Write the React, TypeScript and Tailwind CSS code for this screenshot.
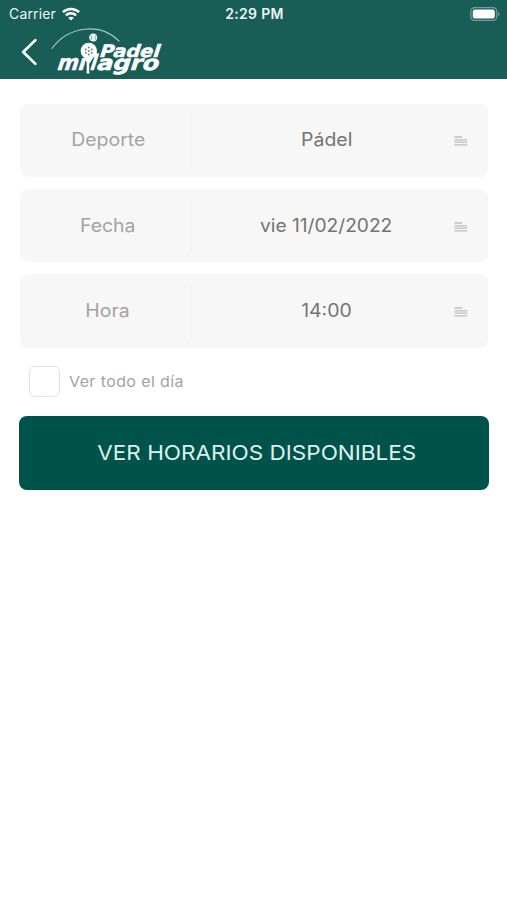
import React from "react";

function StatusBar() {
  return (
    <div className="flex h-7 items-center justify-between pl-[9px] pr-[7px] text-[#eaf5f2]">
      <div className="flex w-[150px] items-center gap-[6px]">
        <span className="text-[14px] leading-none tracking-[0.15px]">Carrier</span>
        <svg className="-mt-px" width="18" height="14" viewBox="0 0 18 14" fill="none" stroke="#fff" strokeWidth="2.5">
          <path d="M0.9 5.2C5.5 0.8 12.5 0.8 17.1 5.2" />
          <path d="M3.9 8.4C6.8 5.6 11.2 5.6 14.1 8.4" />
          <path d="M9 13.6 6.2 10.7C7.8 9.3 10.2 9.3 11.8 10.7Z" fill="#fff" stroke="none" />
        </svg>
      </div>
      <span className="text-[14px] font-semibold leading-none tracking-[0.3px]">2:29 PM</span>
      <div className="flex w-[150px] justify-end">
        <svg className="-mt-px" width="30" height="14" viewBox="0 0 30 14">
          <rect x="0.8" y="0.6" width="26" height="12.8" rx="3.8" fill="none" stroke="#fff" strokeOpacity="0.4" strokeWidth="1.2" />
          <rect x="2.8" y="2.6" width="22" height="8.8" rx="2" fill="#fff" />
          <path d="M28.2 4.8C30 5.6 30 8.4 28.2 9.2Z" fill="#fff" fillOpacity="0.45" />
        </svg>
      </div>
    </div>
  );
}

function Logo() {
  return (
    <svg width="125" height="50" viewBox="45 28 125 50" fontFamily="'DejaVu Sans', sans-serif" fontWeight="700">
      <path d="M52 48.5C68 26 101 22 119 41" fill="none" stroke="#a9cbc4" strokeWidth="1.1" strokeLinecap="round" />
      <g fill="#fff" stroke="#fff" strokeWidth="0.5">
        <text transform="translate(98.5 57) skewX(-18)" fontSize="17" textLength="60" lengthAdjust="spacingAndGlyphs">Padel</text>
        <text transform="translate(56 70.3) skewX(-18)" fontSize="21.5" textLength="28" lengthAdjust="spacingAndGlyphs">mı</text>
        <text transform="translate(89 70.3) skewX(-18)" fontSize="21.5" textLength="6" lengthAdjust="spacingAndGlyphs">l</text>
        <text transform="translate(95.5 70.3) skewX(-18)" fontSize="20.5" textLength="62" lengthAdjust="spacingAndGlyphs">agro</text>
      </g>
      <path d="M84 56 86.6 63V73.5H89.4V64L94 56Z" fill="#fff" />
      <path d="M85.8 61V72M89.8 63V72" stroke="#195d57" strokeWidth="0.7" fill="none" />
      <circle cx="88.8" cy="51" r="8.2" fill="#fff" />
      <g fill="#5b8c83">
        <circle cx="88.8" cy="51" r="1" />
        <circle cx="85.8" cy="49.4" r="1" />
        <circle cx="88.8" cy="47.6" r="1" />
        <circle cx="91.8" cy="49.4" r="1" />
        <circle cx="91.8" cy="52.8" r="1" />
        <circle cx="88.8" cy="54.5" r="1" />
        <circle cx="85.8" cy="52.8" r="1" />
      </g>
      <circle cx="93.2" cy="37.6" r="4" fill="#eef7f4" />
      <path d="M90.6 34.6c1.4 1.8 1.4 4.2 0 5.8M96 35.4c-1.2 1.3-1.2 3.2-.2 4.4" fill="none" stroke="#195d57" strokeWidth="0.5" />
    </svg>
  );
}

function Lines() {
  return (
    <svg className="mt-[2px]" width="14" height="10" viewBox="0 0 14 10" stroke="#bdbdbd" strokeWidth="1.3">
      <path d="M0.5 1H8M0.5 3.8H13.3M0.5 6.2H13.3M0.5 8.8H13.3" />
    </svg>
  );
}

function Field({ label, value, valueClass }: { label: string; value: string; valueClass: string }) {
  return (
    <div className="flex h-[73.3px] items-center rounded-[8px] bg-[#f7f7f7] pr-5 text-[18px] leading-none">
      <div className="flex h-[54px] w-[172px] items-center justify-center border-r border-[#f0f0f0] pl-[5px] text-[#a3a3a3]">
        <span className="scale-x-[1.08]">{label}</span>
      </div>
      <div className="flex flex-1 justify-center pl-[7px] text-[#737373]">
        <span className={valueClass}>{value}</span>
      </div>
      <Lines />
    </div>
  );
}

export default function App() {
  return (
    <div className="min-h-[900px] w-full bg-white font-['Inter',sans-serif]">
      <header className="h-[79px] bg-[#195d57]">
        <StatusBar />
        <div className="flex h-[51px] items-start pl-5">
          <svg className="mt-[9px] shrink-0" width="18" height="30" viewBox="0 0 18 30" fill="none" stroke="#fff" strokeWidth="2.7" strokeLinecap="round" strokeLinejoin="round">
            <path d="M15.4 3.1 3.2 15 15.4 26.9" />
          </svg>
          <div className="ml-[7px]"><Logo /></div>
        </div>
      </header>
      <main className="pl-5 pr-[19px] pt-[24.8px]">
        <div className="flex flex-col gap-3">
          <Field label="Deporte" value="Pádel" valueClass="scale-x-[1.08]" />
          <Field label="Fecha" value="vie 11/02/2022" valueClass="scale-x-[1.065]" />
          <Field label="Hora" value="14:00" valueClass="scale-x-[1.08]" />
        </div>
        <div className="mt-[18.5px] flex h-[31px] items-center gap-[9px] pl-[9px]">
          <span className="size-[31px] rounded-[6px] border-[1.5px] border-[#e2e2e2] bg-white" />
          <span className="origin-left scale-x-[1.07] text-[15px] leading-none tracking-[0.35px] text-[#a3a3a3]">Ver todo el día</span>
        </div>
        <button className="-ml-px mt-[19px] flex h-[73.5px] w-[470px] items-center justify-center rounded-[8px] bg-[#00534a] pl-[5px] text-[20px] leading-none text-[#dff0ed]">
          <span className="scale-x-[1.125]">VER HORARIOS DISPONIBLES</span>
        </button>
      </main>
    </div>
  );
}
